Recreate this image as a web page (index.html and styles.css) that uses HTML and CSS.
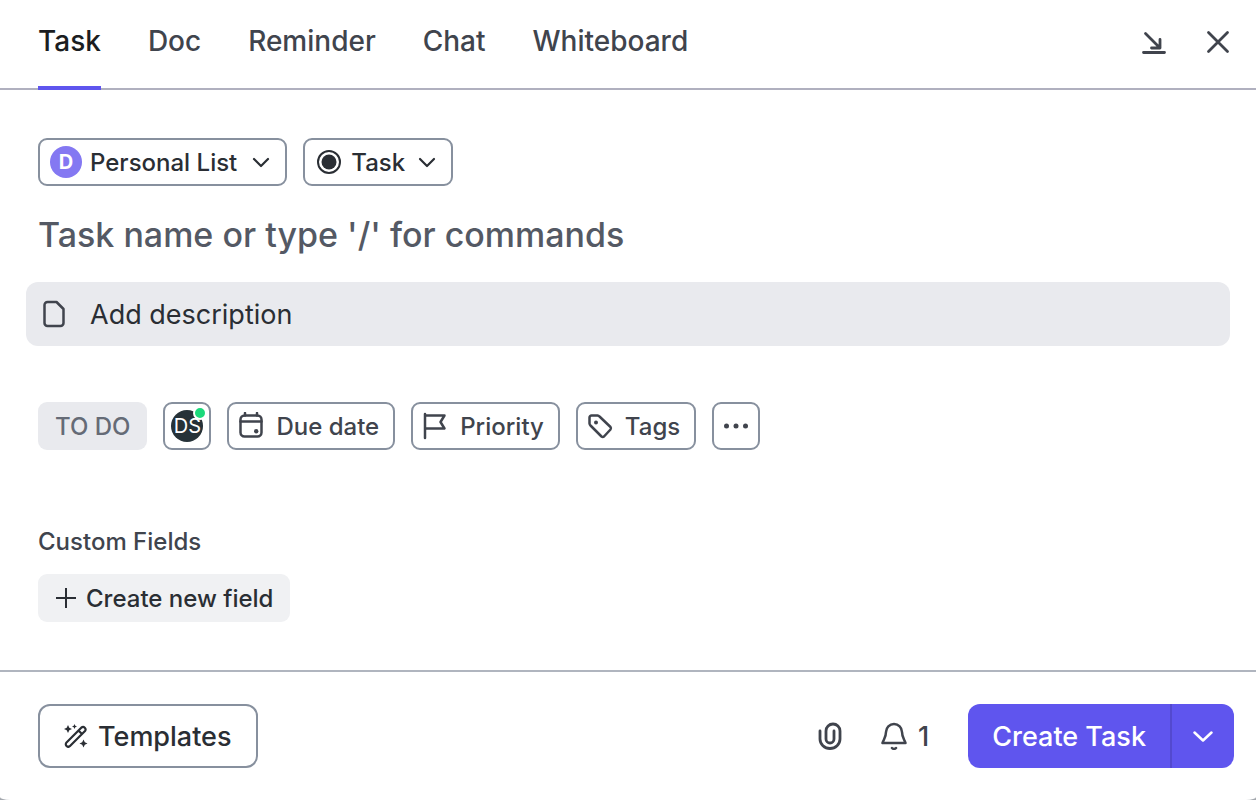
FILE: index.html
```html
<!DOCTYPE html>
<html lang="en">
<head>
<meta charset="utf-8">
<title>Create Task</title>
<link rel="stylesheet" href="styles.css">
</head>
<body>
<main class="dialog">
  <header class="header">
    <nav class="tabs" role="tablist">
      <button class="tab tab-active" role="tab" aria-selected="true">Task</button>
      <button class="tab" role="tab">Doc</button>
      <button class="tab" role="tab">Reminder</button>
      <button class="tab" role="tab">Chat</button>
      <button class="tab" role="tab">Whiteboard</button>
    </nav>
    <div class="window-actions">
      <button class="icon-btn" aria-label="Minimize"><svg class="icon icon-bold" viewBox="0 0 28 28"><path d="M5.500 5.500 19.500 19.500M20 11.500v8.500h-8.500M3.500 24.500h21"/></svg></button>
      <button class="icon-btn" aria-label="Close"><svg class="icon icon-bold" viewBox="0 0 28 28"><path d="M4.500 4.500l19 19M23.500 4.500l-19 19"/></svg></button>
    </div>
  </header>

  <section class="content">
    <div class="row">
      <button class="chip chip-strong chip-list" aria-haspopup="listbox"><span class="list-avatar">D</span><span>Personal List</span><svg class="chevron" viewBox="0 0 20 20"><path d="M3 7l7 7 7-7"/></svg></button>
      <button class="chip chip-strong chip-type" aria-haspopup="listbox"><svg class="type-icon" viewBox="0 0 24 24"><circle cx="12" cy="12" r="11"/><circle class="dot" cx="12" cy="12" r="7.500"/></svg><span>Task</span><svg class="chevron" viewBox="0 0 20 20"><path d="M3 7l7 7 7-7"/></svg></button>
    </div>

    <input class="task-name" type="text" aria-label="Task name" placeholder="Task name or type '/' for commands">

    <button class="description"><svg class="icon" viewBox="0 0 28 28"><path d="M7.500 2H16.500L23.500 9V23a3 3 0 0 1-3 3H7.500a3 3 0 0 1-3-3V5a3 3 0 0 1 3-3z"/></svg><span>Add description</span></button>

    <div class="row fields">
      <button class="chip chip-status">TO DO</button>
      <button class="chip chip-square" aria-label="Assignee DS"><span class="assignee">DS<span class="online"></span></span></button>
      <button class="chip"><svg class="icon" viewBox="0 0 28 28"><rect x="3.500" y="3.500" width="21" height="21" rx="4"/><path d="M3.500 9.500h21M8 1v2.500M20 1v2.500"/><circle class="dot" cx="19.200" cy="19.200" r="2.200"/></svg><span>Due date</span></button>
      <button class="chip"><svg class="icon" viewBox="0 0 28 28"><path d="M4 2v24M4 3.500h19.500l-4 6.500 4 6.500H4"/></svg><span>Priority</span></button>
      <button class="chip"><svg class="icon" viewBox="0 0 28 28"><path d="M5.500 3.500H11.500a3 3 0 0 1 2 1L24.500 15a2 2 0 0 1 0 2.500L18 24.500a2 2 0 0 1-2.500 0L4.500 13.500a3 3 0 0 1-1-2V5.500a2 2 0 0 1 2-2z"/><circle class="dot" cx="10" cy="10.500" r="2"/></svg><span>Tags</span></button>
      <button class="chip chip-square" aria-label="More"><svg class="icon" viewBox="0 0 28 28"><g class="dot"><circle cx="4.500" cy="14" r="2.500"/><circle cx="14" cy="14" r="2.500"/><circle cx="23.500" cy="14" r="2.500"/></g></svg></button>
    </div>

    <h2 class="section-title">Custom Fields</h2>
    <button class="create-field"><svg class="plus" viewBox="0 0 20 20"><path d="M10 0v20M0 10h20"/></svg><span>Create new field</span></button>
  </section>

  <footer class="footer">
    <button class="templates"><svg class="wand" viewBox="0 0 24 24"><path d="M2.500 18.500 17.500 3.500a2.500 2.500 0 0 1 3.500 3.500L6 22a2.400 2.400 0 0 1-3.500-3.500zM14.500 6.500l3.500 3.500"/><path class="dot" d="M4 1l1.300 2.700L8 5l-2.700 1.300L4 9 2.700 6.300 0 5l2.700-1.300zM10.500 0l.8 1.700 1.700.8-1.700.8-.8 1.700-.8-1.700L8 2.500l1.700-.8zM19.500 15.500l1.300 2.700 2.700 1.300-2.700 1.300-1.300 2.700-1.300-2.700-2.700-1.300 2.700-1.300z"/></svg><span>Templates</span></button>
    <div class="footer-actions">
      <button class="icon-btn" aria-label="Attach"><svg class="icon icon-bold" viewBox="0 0 28 28"><path d="M4 9v8a10 9.500 0 0 0 20 0V9a7 7 0 0 0-14 0v8a4 4 0 0 0 8 0V9"/></svg></button>
      <button class="icon-btn watchers"><svg class="icon" viewBox="0 0 28 28"><path d="M14 2a8 8 0 0 0-8 8c0 5-2 7-3.500 11h23C24 17 22 15 22 10a8 8 0 0 0-8-8zM12 26c1 1.200 3 1.200 4 0"/></svg><span>1</span></button>
      <div class="split">
        <button class="create">Create Task</button>
        <button class="create-more" aria-label="More create options"><svg class="chevron" viewBox="0 0 20 20"><path d="M1.500 6.500l8.500 8 8.500-8"/></svg></button>
      </div>
    </div>
  </footer>
</main>
</body>
</html>
```
FILE: styles.css
```css
* { box-sizing: border-box; }

body {
  margin: 0;
  background: #a4a8ae;
  color: #2a2e34;
  font-family: Inter, "Liberation Sans", sans-serif;
  font-weight: 500;
}

button, input {
  margin: 0;
  padding: 0;
  border: 0;
  background: none;
  color: inherit;
  font: inherit;
  white-space: nowrap;
}

svg {
  flex: none;
  fill: none;
  stroke: currentColor;
  stroke-width: 2.5;
  stroke-linecap: round;
  stroke-linejoin: round;
}

svg .dot { fill: currentColor; stroke: none; }

.dialog {
  display: flex;
  flex-direction: column;
  min-height: 100vh;
  background: #fff;
  border-radius: 0 0 10px 10px / 0 0 3px 3px;
}

.header {
  display: flex;
  justify-content: space-between;
  height: 90px;
  padding: 0 24px 0 38px;
  border-bottom: 2px solid #b0b0bf;
}

.tabs { display: flex; gap: 47px; height: 90px; }

.tab {
  padding-bottom: 4px;
  border-bottom: 4px solid transparent;
  color: #40444d;
  font-size: 28px;
  font-weight: 450;
}

.tab-active { border-color: #5f55ee; color: #1b1d21; }

.window-actions { display: flex; align-items: center; gap: 36px; padding-bottom: 4px; }

.icon-btn { display: flex; align-items: center; color: #40444d; }
.icon { width: 28px; height: 28px; }
.icon-bold { stroke-width: 2.8; }
.chevron { width: 20px; height: 20px; }

.content { display: flex; flex: 1; flex-direction: column; align-items: flex-start; padding: 48px 26px 48px 38px; }

.row { display: flex; gap: 16px; }

.chip {
  display: flex;
  align-items: center;
  gap: 11px;
  height: 48px;
  padding: 0 14px 0 8px;
  border: 2px solid #87909e;
  border-radius: 9px;
  color: #40444d;
  font-size: 24px;
}

.chip-strong { color: #2a2e34; }
.chip-list { gap: 8px; padding-left: 10px; }
.chip-type { gap: 10px; padding-left: 12px; }
.chip .chevron { stroke-width: 2.2; }
.chip-list .chevron { margin-left: 6px; }
.chip-type .chevron { margin-left: 2px; }
.type-icon { width: 24px; height: 24px; stroke-width: 2; }

.list-avatar {
  display: grid;
  place-items: center;
  width: 32px;
  height: 32px;
  border-radius: 50%;
  background: #8478f2;
  color: #fff;
  font-size: 20px;
  font-weight: 700;
}

.task-name {
  align-self: stretch;
  height: 48px;
  margin: 24px 0;
  outline: 0;
  font-size: 34px;
}

.task-name::placeholder { color: #545964; opacity: 1; }

.description {
  display: flex;
  align-items: center;
  align-self: stretch;
  gap: 22px;
  height: 64px;
  margin-left: -12px;
  padding-left: 14px;
  border-radius: 12px;
  background: #e9eaee;
  font-size: 27px;
  font-weight: 400;
}

.description .icon { color: #40444d; }

.fields { margin-top: 56px; }

.chip-status { padding: 0 17px; border: 0; background: #e9eaee; color: #656b76; font-weight: 450; }
.chip-square { justify-content: center; width: 48px; padding: 0; }

.assignee {
  position: relative;
  display: grid;
  place-items: center;
  width: 32px;
  height: 32px;
  border-radius: 50%;
  background: #263238;
  color: #fff;
  font-size: 20px;
  font-weight: 400;
}

.online {
  position: absolute;
  top: -4px;
  right: -4px;
  width: 14px;
  height: 14px;
  border: 2px solid #fff;
  border-radius: 50%;
  background: #1bd97b;
}

.section-title {
  margin: 76px 0 16px;
  color: #40444d;
  font-size: 24px;
  font-weight: 450;
  line-height: 32px;
}

.create-field {
  display: flex;
  align-items: center;
  gap: 10px;
  height: 48px;
  padding: 0 17px 0 18px;
  border-radius: 9px;
  background: #f0f1f3;
  font-size: 24px;
}

.plus { width: 20px; height: 20px; stroke-width: 2; stroke-linecap: butt; }

.footer {
  display: flex;
  align-items: center;
  justify-content: space-between;
  padding: 32px 22px 32px 38px;
  border-top: 2px solid #b0b5bf;
}

.templates {
  display: flex;
  align-items: center;
  gap: 10px;
  height: 64px;
  padding: 0 24px;
  border: 2px solid #87909e;
  border-radius: 12px;
  font-size: 27px;
}

.wand { width: 24px; height: 24px; stroke-width: 2.2; }

.footer-actions { display: flex; align-items: center; gap: 36px; font-size: 27px; }
.watchers { gap: 10px; padding-right: 3px; }

.split {
  display: flex;
  height: 64px;
  overflow: hidden;
  border-radius: 12px;
  background: #5f55ee;
  color: #fff;
}

.create { padding: 0 24px; }
.create-more { display: grid; place-items: center; width: 64px; border-left: 2px solid #5349cf; }
```
